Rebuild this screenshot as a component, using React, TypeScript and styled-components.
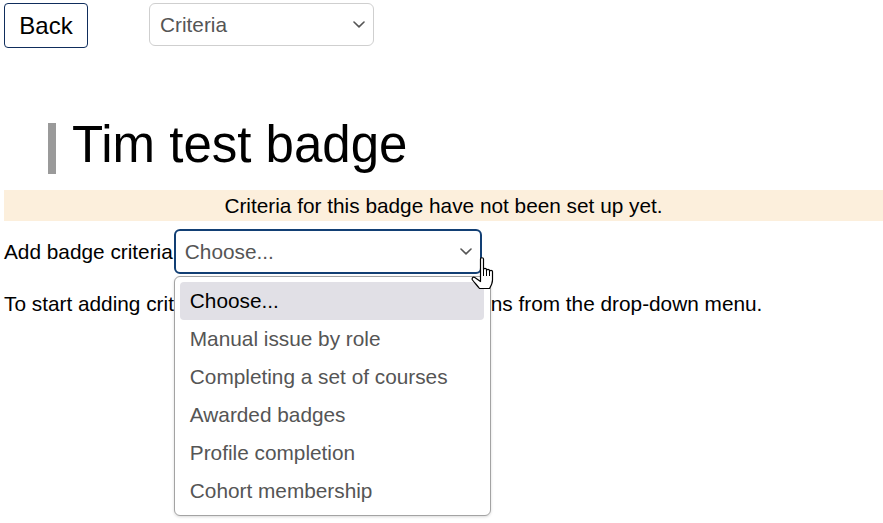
import { FC } from 'react'
import styled, { createGlobalStyle } from 'styled-components'

const options = [
	'Choose...',
	'Manual issue by role',
	'Completing a set of courses',
	'Awarded badges',
	'Profile completion',
	'Cohort membership',
]

const Chevron: FC = () => (
	<svg width='12' height='7' viewBox='0 0 12 7'>
		<polyline
			points='1,1 6,5.8 11,1'
			fill='none'
			stroke='#555'
			strokeWidth='1.6'
			strokeLinecap='round'
			strokeLinejoin='round'
		/>
	</svg>
)

// hand pointer, drawn over the select
const HandCursor: FC = () => (
	<svg width='25' height='33' viewBox='0 0 25 33'>
		<path
			d='M9.5 2 C9.5 0.3 12.5 0.3 12.5 2 V12.5 C12.5 11 15.5 11 15.5 12.5 V13.5 C15.5 12 18.5 12 18.5 13.5 V14.5 C18.5 13 21.5 13 21.5 14.5 V23 C21.5 26.5 20 29 18.5 31.5 H8.5 C6.5 29 3.5 25.5 1.5 23 C0.5 21.5 2 19.3 3.8 20.5 L9.5 24.5 Z'
			fill='#fff'
			stroke='#000'
			strokeWidth='1.2'
			strokeLinejoin='round'
		/>
		<path d='M12.5 12.5 V19 M15.5 13.5 V19 M18.5 14.5 V19' stroke='#000' strokeWidth='1' />
	</svg>
)

export default function App() {
	return (
		<>
			<GlobalStyle />
			<Page>
				<TopBar>
					<BackButton type='button'>Back</BackButton>
					<NavSelect>
						Criteria
						<Chevron />
					</NavSelect>
				</TopBar>

				<Heading>
					<HeadingBar />
					<Title>Tim test badge</Title>
				</Heading>

				<Notice>Criteria for this badge have not been set up yet.</Notice>

				<CriteriaRow>
					<Label>Add badge criteria</Label>
					<SelectWrap>
						<ChooseSelect>
							Choose...
							<Chevron />
						</ChooseSelect>
						<Pointer>
							<HandCursor />
						</Pointer>
						<Dropdown>
							{options.map((o, i) => (
								<Option key={o} $active={i === 0}>
									{o}
								</Option>
							))}
						</Dropdown>
					</SelectWrap>
				</CriteriaRow>

				<Help>
					To start adding criteria, please select one of the options from the
					drop-down menu.
				</Help>
			</Page>
		</>
	)
}

const GlobalStyle = createGlobalStyle`
	html, body, #root {
		height: 100%;
	}
	body {
		margin: 0;
		background: #fff;
		font-family: 'Liberation Sans', Arial, sans-serif;
		font-size: 20.8px;
		color: #000;
	}
`

const Page = styled.div`
	min-height: 100vh;
	box-sizing: border-box;
	padding: 3px 0 0 4px;
`

const TopBar = styled.div`
	display: flex;
	align-items: flex-start;
	gap: 61px;
`

const BackButton = styled.button`
	width: 84px;
	height: 45px;
	box-sizing: border-box;
	background: #fff;
	border: 1px solid #0f2d5c;
	border-radius: 4px;
	font-family: inherit;
	font-size: 24px;
	color: #000;
	padding: 0;
`

const NavSelect = styled.div`
	width: 225px;
	height: 43px;
	box-sizing: border-box;
	border: 1px solid #cfcfcf;
	border-radius: 6px;
	display: flex;
	align-items: center;
	justify-content: space-between;
	padding: 0 8px 0 10px;
	color: #555;
	font-size: 20.8px;
`

const Heading = styled.div`
	display: flex;
	align-items: flex-start;
	gap: 16px;
	margin: 75px 0 0 44px;
`

const HeadingBar = styled.div`
	width: 8px;
	height: 51px;
	background: #9a9a9a;
`

const Title = styled.h1`
	margin: -4px 0 0;
	font-size: 51px;
	font-weight: 400;
	line-height: 51px;
`

const Notice = styled.div`
	margin-top: 16px;
	height: 31px;
	line-height: 31px;
	background: #fcefdc;
	text-align: center;
`

const CriteriaRow = styled.div`
	display: flex;
	align-items: center;
	margin-top: 8px;
`

const Label = styled.span`
	margin-right: 1px;
`

const SelectWrap = styled.div`
	position: relative;
`

const ChooseSelect = styled.div`
	width: 308px;
	height: 45px;
	box-sizing: border-box;
	border: 2px solid #123f74;
	border-radius: 6px;
	display: flex;
	align-items: center;
	justify-content: space-between;
	padding: 0 8px 0 9px;
	color: #555;
`

const Pointer = styled.div`
	position: absolute;
	left: 297px;
	top: 28px;
	z-index: 3;
	line-height: 0;
`

const Dropdown = styled.div`
	position: absolute;
	top: 47px;
	left: 0;
	width: 317px;
	box-sizing: border-box;
	padding: 5px 6px 5px 5px;
	background: #fff;
	border: 1px solid #a3a3a3;
	border-radius: 6px;
	box-shadow: 0 1px 3px rgba(0, 0, 0, 0.15);
	z-index: 2;
`

const Option = styled.div<{ $active: boolean }>`
	height: 38px;
	line-height: 38px;
	padding-left: 10px;
	border-radius: 4px;
	white-space: nowrap;
	background: ${p => (p.$active ? '#e1e0e6' : 'transparent')};
	color: ${p => (p.$active ? '#000' : '#555')};
`

const Help = styled.p`
	margin: 18px 0 0;
	line-height: 24px;
`
